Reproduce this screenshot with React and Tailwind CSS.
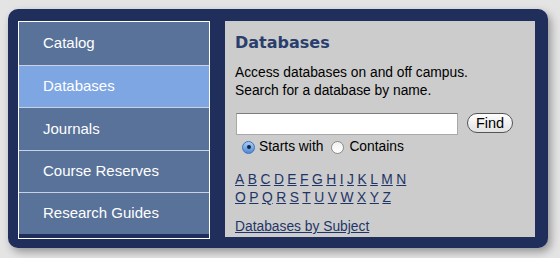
import {useState} from 'react';

const NAV=[
    {label:'Catalog', h:'h-[43px]'},
    {label:'Databases', h:'h-[42px]', active:true},
    {label:'Journals', h:'h-[43px]'},
    {label:'Course Reserves', h:'h-[42px]'},
    {label:'Research Guides', h:'h-[42px]'}
];

const ROW1=['A','B','C','D','E','F','G','H','I','J','K','L','M','N'];
const ROW2=['O','P','Q','R','S','T','U','V','W','X','Y','Z'];

function Radio({checked}){
    return checked?(
        <span className="w-[13px] h-[13px] rounded-full border border-[#3f6fb5] bg-gradient-to-b from-[#a9cdf5] to-[#4d8ad8] flex items-center justify-center">
            <span className="w-[4px] h-[4px] rounded-full bg-[#10243f]"/>
        </span>
    ):(
        <span className="w-[13px] h-[13px] rounded-full border border-[#8a8a8a] bg-gradient-to-b from-[#f0f0f0] to-white"/>
    );
}

function App(){
    const [mode, setMode]=useState('starts');

    return(
        <div className="w-[560px] h-[258px] bg-[#e4e4e4] pt-[9px] pl-[8px] font-['Liberation_Sans',Arial,sans-serif]">
            <div className="w-[540px] h-[239px] bg-[#1f2e5a] rounded-[10px] shadow-[3px_4px_8px_rgba(0,0,0,0.35)] flex pt-[12px] pl-[10px]">
                <div className="w-[192px] h-[218px] border border-white flex flex-col">
                    {NAV.map((item, i)=>(
                        <div key={item.label} className={`${item.h} ${i>0?'border-t border-[#c9d2e2]':''} ${item.active?'bg-[#7ea6e2]':'bg-[#587299]'} flex items-center pl-[24px] text-white text-[15px]`}>
                            {item.label}
                        </div>
                    ))}
                </div>

                <div className="ml-[15px] w-[310px] h-[216px] bg-[#cccccc] px-[10px] pt-[12px]">
                    <h1 className="font-['DejaVu_Sans',Verdana,sans-serif] font-bold text-[16px] leading-[20px] text-[#2a3e6d]">Databases</h1>
                    <p className="mt-[11px] text-[13.8px] leading-[18px] text-black">
                        Access databases on and off campus.<br/>Search for a database by name.
                    </p>

                    <div className="mt-[13px] flex items-center">
                        <input type="text" className="ml-[1px] w-[222px] h-[22px] bg-white border border-[#a8a8a8] border-t-[#7d7d7d] outline-none"/>
                        <button className="ml-[9px] -mt-[2px] w-[46px] h-[20px] rounded-full border border-[#555] bg-gradient-to-b from-white to-[#e2e2e2] text-[14.5px] leading-none text-black">
                            Find
                        </button>
                    </div>

                    <div className="mt-[3px] ml-[7px] flex items-center text-[13.8px] text-black h-[18px]">
                        <label className="flex items-center gap-[4px]" onClick={()=>setMode('starts')}>
                            <Radio checked={mode==='starts'}/>
                            <span>Starts with</span>
                        </label>
                        <label className="ml-[8px] flex items-center gap-[5px]" onClick={()=>setMode('contains')}>
                            <Radio checked={mode==='contains'}/>
                            <span>Contains</span>
                        </label>
                    </div>

                    <div className="mt-[15px] text-[13.8px] leading-[18px] text-[#1f3568]">
                        <div className="flex gap-[3.5px]">
                            {ROW1.map(l=><a key={l} href="#" className="underline">{l}</a>)}
                        </div>
                        <div className="flex gap-[3.5px]">
                            {ROW2.map(l=><a key={l} href="#" className="underline">{l}</a>)}
                        </div>
                    </div>

                    <a href="#" className="block mt-[11px] text-[13.8px] leading-[18px] text-[#1f3568] underline">Databases by Subject</a>
                </div>
            </div>
        </div>
    );
}

export default App;
